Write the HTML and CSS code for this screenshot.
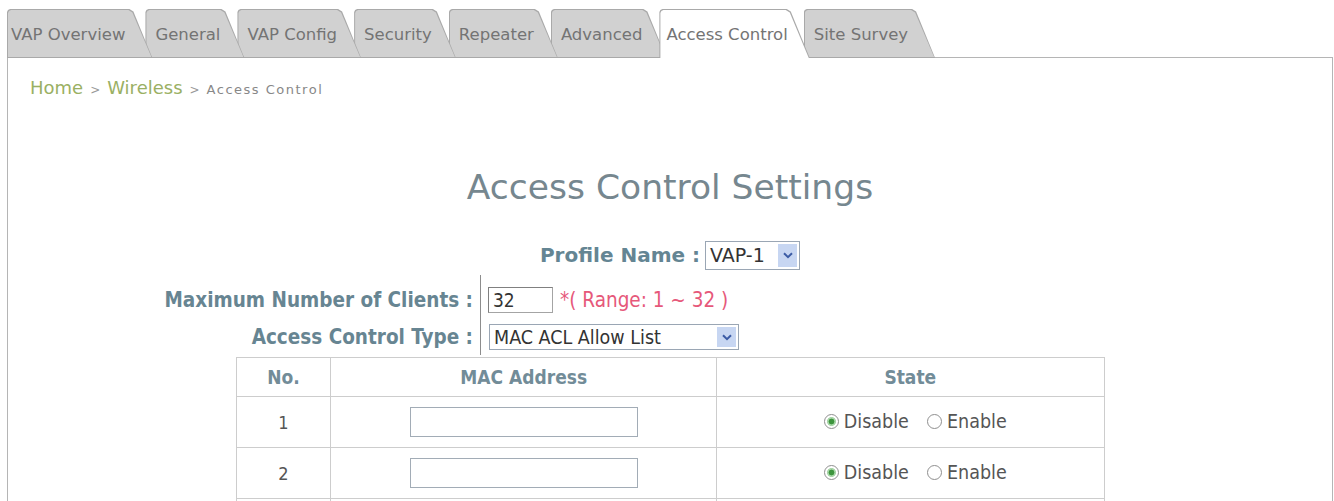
FILE: index.html
```html
<!DOCTYPE html>
<html lang="en">
<head>
<meta charset="utf-8">
<title>Access Control Settings</title>
<link rel="stylesheet" href="styles.css">
</head>
<body>
<div class="tabs">
  <div class="tab first">VAP Overview</div>
  <div class="tab">General</div>
  <div class="tab">VAP Config</div>
  <div class="tab">Security</div>
  <div class="tab">Repeater</div>
  <div class="tab">Advanced</div>
  <div class="tab active">Access Control</div>
  <div class="tab last">Site Survey</div>
</div>
<div class="panel">
  <div class="crumb"><a href="#">Home</a><span class="sep">&gt;</span><a href="#">Wireless</a><span class="sep">&gt;</span><span class="here">Access Control</span></div>
  <h1 class="title">Access Control Settings</h1>
  <div class="profile">
    <span class="profile-label">Profile Name :</span>
    <div class="select select-profile"><span class="val">VAP-1</span><span class="btn"><svg width="10" height="7" viewBox="0 0 10 7"><path d="M1 1.2 L5 5.2 L9 1.2" fill="none" stroke="#3b5ba5" stroke-width="2"/></svg></span></div>
  </div>
  <div class="fields">
    <div class="lab first-row">Maximum Number of Clients :</div>
    <div class="ctl first-row"><input class="num" type="text" value="32"><span class="hint">*( Range: 1 ~ 32 )</span></div>
    <div class="lab">Access Control Type :</div>
    <div class="ctl"><div class="select select-type"><span class="val">MAC ACL Allow List</span><span class="btn"><svg width="10" height="7" viewBox="0 0 10 7"><path d="M1 1.2 L5 5.2 L9 1.2" fill="none" stroke="#3b5ba5" stroke-width="2"/></svg></span></div></div>
  </div>
  <table class="acl">
    <colgroup><col class="c-no"><col class="c-mac"><col class="c-state"></colgroup>
    <tr><th>No.</th><th>MAC Address</th><th>State</th></tr>
    <tr>
      <td class="no">1</td>
      <td><input class="mac" type="text"></td>
      <td class="state"><span class="radio"><span class="dot on"></span>Disable</span><span class="radio"><span class="dot"></span>Enable</span></td>
    </tr>
    <tr>
      <td class="no">2</td>
      <td><input class="mac" type="text"></td>
      <td class="state"><span class="radio"><span class="dot on"></span>Disable</span><span class="radio"><span class="dot"></span>Enable</span></td>
    </tr>
    <tr class="more">
      <td></td>
      <td></td>
      <td></td>
    </tr>
  </table>
</div>
</body>
</html>
```
FILE: styles.css
```css
html, body {
  margin: 0;
  padding: 0;
  overflow: hidden;
  background: #fff;
}
body {
  padding: 9px 0 0 7px;
  font-family: "DejaVu Sans", Verdana, sans-serif;
}

/* ---------- tabs ---------- */
.tabs {
  display: flex;
  position: relative;
  z-index: 2;
  height: 49px;
  margin-bottom: -1px;
}
.tab {
  position: relative;
  height: 49px;
  box-sizing: border-box;
  padding: 16px 24px 0 10px;
  margin-right: -7px;
  font-size: 16.5px;
  line-height: 20px;
  color: #747474;
  white-space: nowrap;
}
.tab.first { padding-left: 4px; padding-right: 27px; }
.tab.active { padding-left: 7px; padding-right: 22px; margin-right: -6px; }
.tab.last { padding-right: 27px; }
.tab::before,
.tab::after {
  content: "";
  position: absolute;
  z-index: -1;
}
.tab::before {
  inset: 0;
  background: #a9a9a9;
  clip-path: polygon(0 3px, 1px 1px, 3px 0, calc(100% - 23px) 0, calc(100% - 19px) 2.5px, 100% 100%, 0 100%);
}
.tab::after {
  inset: 1px 1px 1px 1px;
  background: #d1d1d1;
  clip-path: polygon(0 3px, 1px 1px, 3px 0, calc(100% - 23px) 0, calc(100% - 19px) 2.5px, 100% 100%, 0 100%);
}
.tab.active::after {
  bottom: 0;
  background: #fff;
}
.tab:nth-child(1) { z-index: 8; }
.tab:nth-child(2) { z-index: 7; }
.tab:nth-child(3) { z-index: 6; }
.tab:nth-child(4) { z-index: 5; }
.tab:nth-child(5) { z-index: 4; }
.tab:nth-child(6) { z-index: 3; }
.tab:nth-child(8) { z-index: 1; }
.tab.active { z-index: 10; }

/* ---------- panel ---------- */
.panel {
  position: relative;
  z-index: 1;
  width: 1326px;
  min-height: 600px;
  box-sizing: border-box;
  border: 1px solid #b5b5b5;
  background: #fff;
}

.crumb {
  padding: 19px 0 0 22px;
  line-height: 22px;
  font-size: 18px;
  color: #999;
}
.crumb a {
  color: #9ab063;
  text-decoration: none;
}
.crumb .sep {
  font-size: 12px;
  margin: 0 7px;
}
.crumb .here {
  font-size: 13px;
  letter-spacing: 1.5px;
  color: #888;
}

.title {
  margin: 66px 0 0;
  font-size: 34.5px;
  line-height: 40px;
  font-weight: normal;
  text-align: center;
  color: #76878f;
}

/* ---------- profile ---------- */
.profile {
  display: flex;
  justify-content: center;
  align-items: center;
  gap: 5px;
  margin-top: 33px;
  height: 30px;
}
.profile-label {
  font-weight: bold;
  font-size: 20px;
  color: #648593;
}
.select {
  display: flex;
  align-items: center;
  box-sizing: border-box;
  border: 1px solid #9aa6b4;
  background: #fff;
  color: #333;
}
.select .val {
  flex: 1;
  padding-left: 4px;
  white-space: nowrap;
}
.select .btn {
  align-self: stretch;
  width: 19px;
  margin: 2px;
  background: #c7d6f2;
  display: flex;
  align-items: center;
  justify-content: center;
}
.select-profile {
  width: 95px;
  height: 29px;
  font-size: 19px;
}
.select-type {
  width: 250px;
  height: 26px;
  margin-left: 1px;
  font-family: "DejaVu Sans Condensed", "DejaVu Sans", sans-serif;
  font-size: 19.5px;
}

/* ---------- fields ---------- */
.fields {
  display: grid;
  grid-template-columns: 472px auto;
  grid-template-rows: 44px 36px;
  margin-top: 5px;
}
.lab {
  display: flex;
  align-items: center;
  justify-content: flex-end;
  padding-right: 7px;
  font-family: "DejaVu Sans Condensed", "DejaVu Sans", sans-serif;
  font-weight: bold;
  font-size: 20.5px;
  color: #678592;
  white-space: nowrap;
}
.ctl {
  display: flex;
  align-items: center;
  border-left: 1px solid #8d8d8d;
  padding-left: 7px;
}
.first-row { padding-top: 6px; }
.num {
  width: 65px;
  height: 26px;
  box-sizing: border-box;
  margin: 0;
  border: 1px solid #a4a4a4;
  border-top-color: #808080;
  border-left-color: #808080;
  padding: 0 0 0 4px;
  font-family: "DejaVu Sans Condensed", "DejaVu Sans", sans-serif;
  font-size: 19px;
  color: #333;
  outline: none;
}
.hint {
  margin-left: 7px;
  font-family: "DejaVu Sans Condensed", "DejaVu Sans", sans-serif;
  font-size: 20.5px;
  color: #e6587a;
  white-space: nowrap;
}

/* ---------- table ---------- */
.acl {
  width: 869px;
  margin: 2px auto 0;
  border-collapse: collapse;
  font-family: "DejaVu Sans Condensed", "DejaVu Sans", sans-serif;
}
.c-no { width: 95px; }
.c-mac { width: 386px; }
.c-state { width: 388px; }
.acl th,
.acl td {
  border: 1px solid #cdcdcd;
  padding: 0;
  text-align: center;
}
.acl th {
  height: 38px;
  font-size: 19px;
  font-weight: bold;
  color: #728c98;
}
.acl td {
  height: 50px;
  font-size: 18px;
  color: #555;
}
.mac {
  display: block;
  margin: 0 auto;
  width: 228px;
  height: 30px;
  box-sizing: border-box;
  border: 1px solid #a2acb6;
  background: #fff;
  outline: none;
}
.state {
  padding-left: 10px !important;
}
.acl td.state {
  font-size: 19.5px;
}
.radio {
  display: inline-flex;
  align-items: center;
  margin: 0 9px;
}
.dot {
  width: 15px;
  height: 15px;
  box-sizing: border-box;
  border: 1px solid #8f8f8f;
  border-radius: 50%;
  background: #fff;
  margin-right: 5px;
}
.dot.on {
  background: radial-gradient(circle, #3d953d 0 2.6px, #a9d6a9 3.2px 4.2px, #fff 4.8px);
}
```
